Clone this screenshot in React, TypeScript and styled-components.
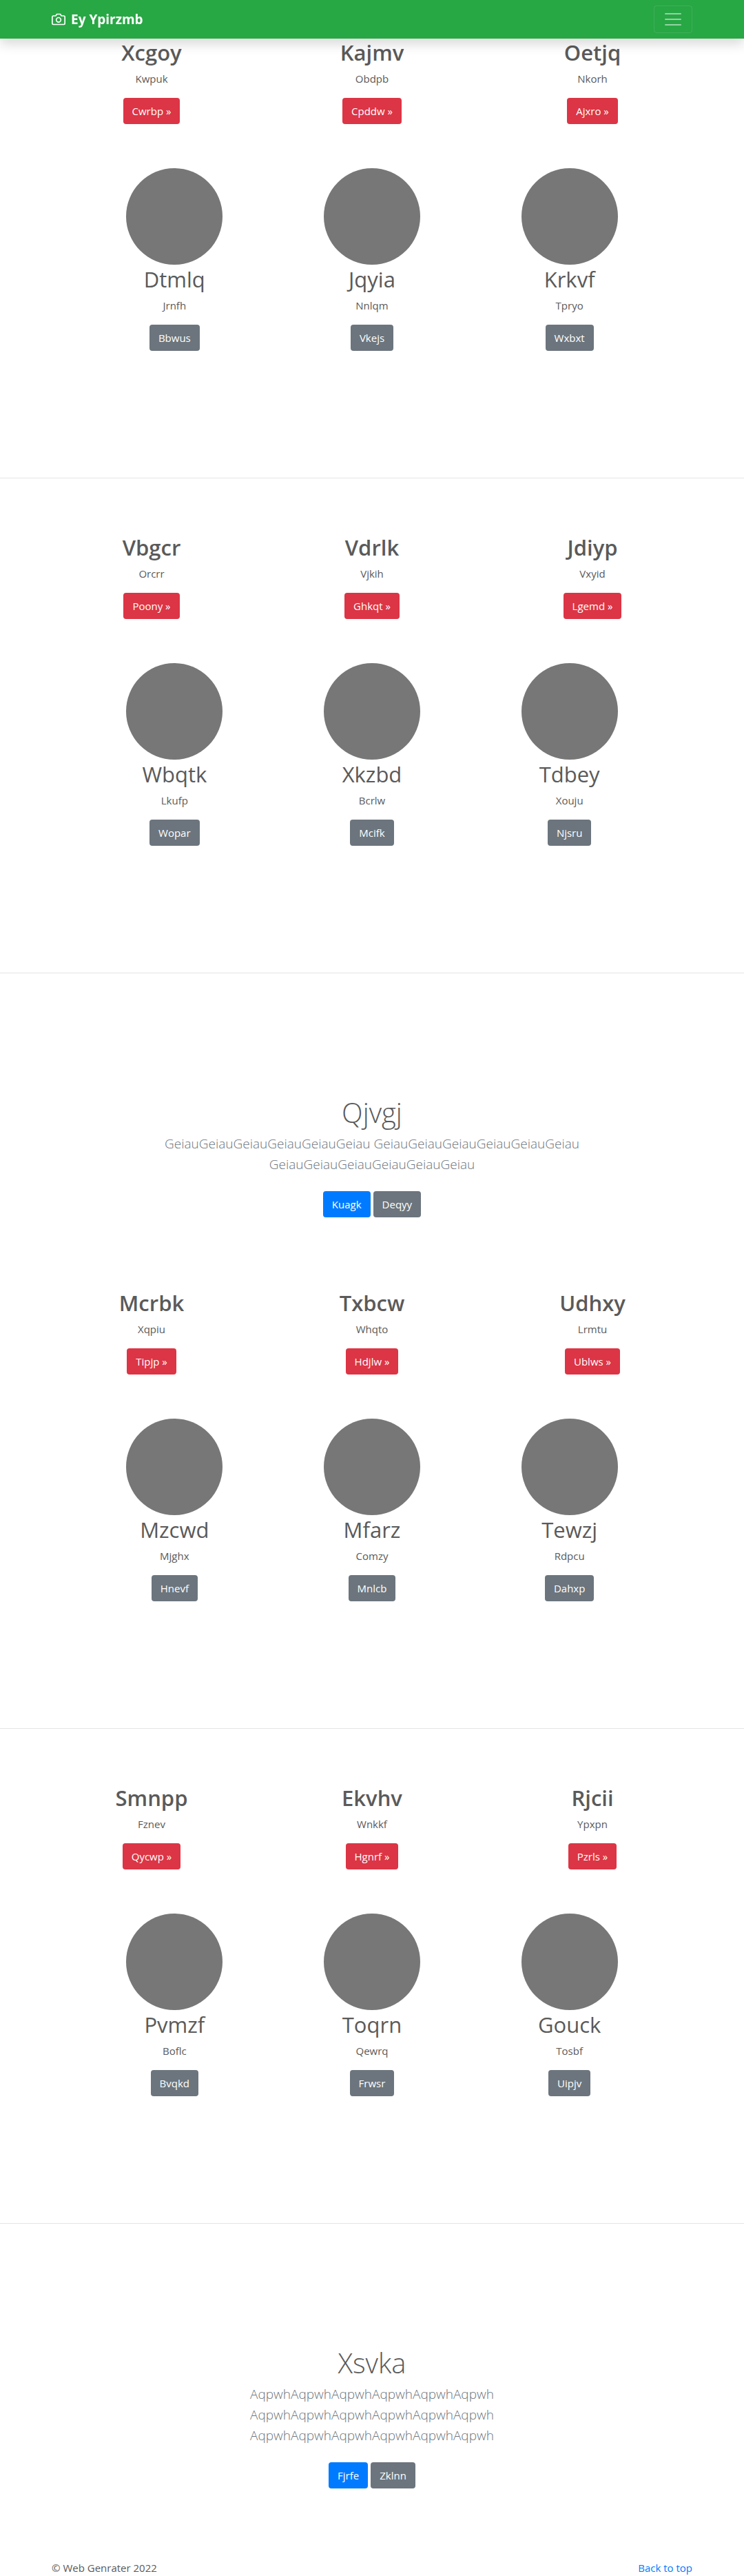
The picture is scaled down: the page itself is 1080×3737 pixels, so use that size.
import React from "react";
import styled, { createGlobalStyle } from "styled-components";

const GlobalStyle = createGlobalStyle`
  *, *::before, *::after { box-sizing: border-box; }
  body {
    margin: 0;
    background: #fff;
    color: #5a5a5a;
    font-family: "Segoe UI", "Open Sans", "Noto Sans", sans-serif;
    font-size: 15px;
    line-height: 24px;
  }
`;

const Header = styled.header`
  position: fixed;
  inset: 0 0 auto;
  z-index: 10;
  background: #28a745;
  box-shadow: 0 8px 16px rgba(0, 0, 0, 0.15);
`;

const Container = styled.div`
  max-width: 960px;
  margin: 0 auto;
`;

const NavBar = styled(Container)`
  display: flex;
  align-items: center;
  justify-content: space-between;
  padding: 8px 15px;
`;

const Brand = styled.a`
  display: flex;
  align-items: center;
  gap: 8px;
  color: #fff;
  font-size: 19px;
  font-weight: 700;
  line-height: 30px;
  text-decoration: none;
`;

const Toggler = styled.button`
  display: flex;
  align-items: center;
  height: 40px;
  padding: 0 12px;
  border: 1px solid rgba(255, 255, 255, 0.1);
  border-radius: 4px;
  background: transparent;
  color: rgba(255, 255, 255, 0.5);
`;

const Main = styled.main`
  padding-top: 55px;
`;

const Section = styled.section`
  padding-bottom: 184px;
`;

const Divider = styled.hr`
  margin: 0 0 79px;
  border: 0;
  border-top: 1px solid rgba(0, 0, 0, 0.1);
`;

const Columns = styled(Container)<{ $inset?: boolean }>`
  display: grid;
  grid-template-columns: repeat(3, 1fr);
  padding: ${(p) => (p.$inset ? "64px 50px 0" : "0")};
`;

const Cell = styled.div`
  display: flex;
  flex-direction: column;
  align-items: center;
  text-align: center;
`;

const Avatar = styled.div`
  width: 140px;
  height: 140px;
  border-radius: 50%;
  background: #777;
`;

const Title = styled.h2<{ $strong?: boolean }>`
  margin: 0 0 4px;
  font-size: 31px;
  font-weight: ${(p) => (p.$strong ? 600 : 400)};
  line-height: 43px;
`;

const Text = styled.p`
  margin: 0 0 16px;
`;

const tones = { danger: "#dc3545", secondary: "#6c757d", primary: "#007bff" };

const Button = styled.a<{ $tone: keyof typeof tones }>`
  padding: 7px 13px;
  border-radius: 4px;
  background: ${(p) => tones[p.$tone]};
  color: #fff;
  text-decoration: none;
`;

const Hero = styled.section`
  display: flex;
  flex-direction: column;
  align-items: center;
  max-width: 640px;
  margin: 0 auto;
  padding: 97px 15px 103px;
  text-align: center;
`;

const HeroTitle = styled.h1`
  margin: 0 0 4px;
  font-size: 40px;
  font-weight: 300;
  line-height: 52px;
`;

const Lead = styled.p`
  margin: 0 0 24px;
  color: #6c757d;
  font-size: 19px;
  font-weight: 300;
  line-height: 30px;
`;

const Actions = styled.div`
  display: flex;
  gap: 4px;
`;

const Footer = styled(Container).attrs({ as: "footer" })`
  display: flex;
  justify-content: space-between;
  padding: 0 15px;
`;

const Link = styled.a`
  color: #007bff;
  text-decoration: none;
`;

type Item = [title: string, text: string, action: string];

function Group({ features, people }: { features: Item[]; people: Item[] }) {
  return (
    <>
      <Section>
        <Columns>
          {features.map(([title, text, action]) => (
            <Cell key={title}>
              <Title $strong>{title}</Title>
              <Text>{text}</Text>
              <Button href="#" $tone="danger">{action} »</Button>
            </Cell>
          ))}
        </Columns>
        <Columns $inset>
          {people.map(([title, text, action]) => (
            <Cell key={title}>
              <Avatar />
              <Title>{title}</Title>
              <Text>{text}</Text>
              <Button href="#" $tone="secondary">{action}</Button>
            </Cell>
          ))}
        </Columns>
      </Section>
      <Divider />
    </>
  );
}

function Banner({ title, word, actions }: { title: string; word: string; actions: [string, string] }) {
  const run = word.repeat(6);
  return (
    <Hero>
      <HeroTitle>{title}</HeroTitle>
      <Lead>{[run, run, run].join(" ")}</Lead>
      <Actions>
        <Button href="#" $tone="primary">{actions[0]}</Button>
        <Button href="#" $tone="secondary">{actions[1]}</Button>
      </Actions>
    </Hero>
  );
}

export default function App() {
  return (
    <>
      <GlobalStyle />
      <Header>
        <NavBar>
          <Brand href="#">
            <svg width="20" height="20" viewBox="0 0 24 24" fill="none" stroke="currentColor" strokeWidth="2" strokeLinecap="round" strokeLinejoin="round" aria-hidden="true">
              <path d="M23 19a2 2 0 0 1-2 2H3a2 2 0 0 1-2-2V8a2 2 0 0 1 2-2h4l2-3h6l2 3h4a2 2 0 0 1 2 2z" />
              <circle cx="12" cy="13" r="4" />
            </svg>
            Ey Ypirzmb
          </Brand>
          <Toggler type="button" aria-label="Toggle navigation">
            <svg width="30" height="30" viewBox="0 0 30 30" stroke="currentColor" strokeWidth="2" strokeLinecap="round" aria-hidden="true">
              <path d="M4 7h22M4 15h22M4 23h22" />
            </svg>
          </Toggler>
        </NavBar>
      </Header>
      <Main>
        <Group
          features={[["Xcgoy", "Kwpuk", "Cwrbp"], ["Kajmv", "Obdpb", "Cpddw"], ["Oetjq", "Nkorh", "Ajxro"]]}
          people={[["Dtmlq", "Jrnfh", "Bbwus"], ["Jqyia", "Nnlqm", "Vkejs"], ["Krkvf", "Tpryo", "Wxbxt"]]}
        />
        <Group
          features={[["Vbgcr", "Orcrr", "Poony"], ["Vdrlk", "Vjkih", "Ghkqt"], ["Jdiyp", "Vxyid", "Lgemd"]]}
          people={[["Wbqtk", "Lkufp", "Wopar"], ["Xkzbd", "Bcrlw", "Mcifk"], ["Tdbey", "Xouju", "Njsru"]]}
        />
        <Banner title="Qjvgj" word="Geiau" actions={["Kuagk", "Deqyy"]} />
        <Group
          features={[["Mcrbk", "Xqpiu", "Tipjp"], ["Txbcw", "Whqto", "Hdjlw"], ["Udhxy", "Lrmtu", "Ublws"]]}
          people={[["Mzcwd", "Mjghx", "Hnevf"], ["Mfarz", "Comzy", "Mnlcb"], ["Tewzj", "Rdpcu", "Dahxp"]]}
        />
        <Group
          features={[["Smnpp", "Fznev", "Qycwp"], ["Ekvhv", "Wnkkf", "Hgnrf"], ["Rjcii", "Ypxpn", "Pzrls"]]}
          people={[["Pvmzf", "Boflc", "Bvqkd"], ["Toqrn", "Qewrq", "Frwsr"], ["Gouck", "Tosbf", "Uipjv"]]}
        />
        <Banner title="Xsvka" word="Aqpwh" actions={["Fjrfe", "Zklnn"]} />
      </Main>
      <Footer>
        <span>© Web Genrater 2022</span>
        <Link href="#">Back to top</Link>
      </Footer>
    </>
  );
}
